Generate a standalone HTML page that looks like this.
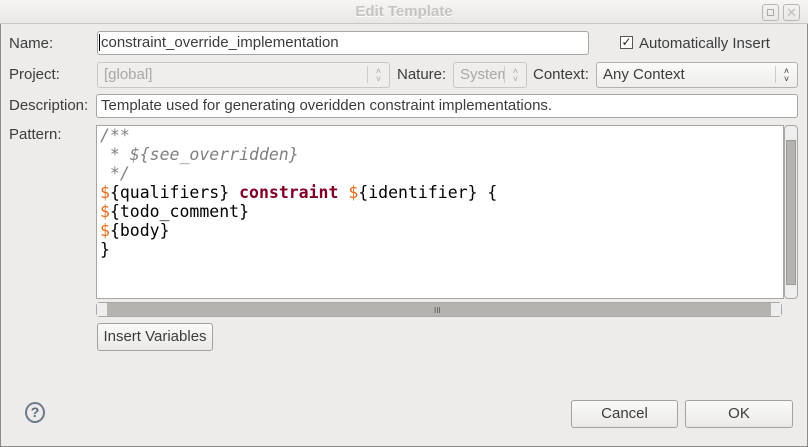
<!DOCTYPE html>
<html><head><style>
*{box-sizing:border-box;margin:0;padding:0}
body{width:808px;height:447px;overflow:hidden;background:#edeceb;font-family:"Liberation Sans",sans-serif;font-size:15px;color:#3c3c3c;position:relative}
.a{position:absolute}
.win{left:0;top:0;width:808px;height:447px;border:1px solid #8a8a86;border-top:none}
.title{left:0;top:0;width:808px;height:24px;background:linear-gradient(#f6f5f4,#e8e7e5);border-bottom:1px solid #c8c6c2;text-align:center;color:#c5c3bf;font-size:15px;font-weight:bold;line-height:24px;text-shadow:0 1px 0 #fff}
.lbl{color:#3c3c3c;font-size:15px}
.inp{background:#fff;border:1px solid #a7a6a2;border-radius:3px;font-size:15px;line-height:22px;padding-left:4px;color:#3c3c3c}
.combo{background:linear-gradient(#fbfbfa,#eeedeb);border:1px solid #b3b1ad;border-radius:3px;font-size:15px;line-height:24px;padding-left:6px}
.dis{color:#a9a7a3;background:#efeeec;border-color:#c9c7c3}
.arr{position:absolute;right:0;top:3px;width:22px;height:17px;border-left:1px solid #ccc;text-align:center;font-size:9px;line-height:8px;padding-top:1px}
.btn{background:linear-gradient(#fafaf9,#eae9e7);border:1px solid #a4a29e;border-radius:3px;text-align:center;line-height:26px;color:#3c3c3c}
.code{font-family:"DejaVu Sans Mono",monospace;font-size:16.5px;line-height:19px;color:#000;padding:0 0 0 3px;white-space:pre}
.c{color:#808080;font-style:italic}.d{color:#e86a1a}.k{color:#7f0027;font-weight:bold}
</style></head><body>
<div class="a win"></div>
<div class="a title">Edit Template</div>
<div class="a" style="left:762px;top:4px;width:17px;height:17px;border:1px solid #b8b6b2;border-radius:3px"><div style="margin:4px;width:7px;height:7px;border:1px solid #aaa"></div></div>
<div class="a" style="left:783px;top:4px;width:17px;height:17px;border:1px solid #b8b6b2;border-radius:3px;color:#bbb;font-size:13px;line-height:15px;text-align:center">✕</div>

<div class="a lbl" style="left:9px;top:35px">Name:</div>
<div class="a inp" style="left:97px;top:31px;width:492px;height:24px"><span style="border-left:1px solid #000;padding-left:1px;margin-left:-3px">constraint_override_implementation</span></div>
<div class="a" style="left:620px;top:36px;width:13px;height:13px;border:1px solid #555;background:#fff;font-size:12px;line-height:11px;text-align:center;color:#222">✓</div>
<div class="a lbl" style="left:639px;top:35px">Automatically Insert</div>

<div class="a lbl" style="left:9px;top:66px">Project:</div>
<div class="a combo dis" style="left:97px;top:62px;width:293px;height:26px">[global]<div class="arr">˄<br>˅</div></div>
<div class="a lbl" style="left:397px;top:66px">Nature:</div>
<div class="a combo dis" style="left:453px;top:62px;width:74px;height:26px;overflow:hidden">System<div class="arr" style="background:#efeeec">˄<br>˅</div></div>
<div class="a lbl" style="left:533px;top:66px">Context:</div>
<div class="a combo" style="left:596px;top:62px;width:202px;height:26px">Any Context<div class="arr" style="color:#333">˄<br>˅</div></div>

<div class="a lbl" style="left:9px;top:97px">Description:</div>
<div class="a inp" style="left:96px;top:94px;width:702px;height:24px">Template used for generating overidden constraint implementations.</div>

<div class="a lbl" style="left:9px;top:126px">Pattern:</div>
<div class="a code" style="left:96px;top:125px;width:688px;height:174px;background:#fff;border:1px solid #a7a6a2"><span class="c">/**
 * ${see_overridden}
 */</span>
<span class="d">$</span>{qualifiers} <span class="k">constraint</span> <span class="d">$</span>{identifier} {
<span class="d">$</span>{todo_comment}
<span class="d">$</span>{body}
}</div>
<div class="a" style="left:784px;top:125px;width:14px;height:174px;border:1px solid #a9a7a3;border-radius:4px;background:#eee"><div style="position:absolute;left:1px;top:14px;width:10px;height:145px;background:#b4b3b0;border:1px solid #999"></div></div>
<div class="a" style="left:96px;top:302px;width:686px;height:15px;border:1px solid #a9a7a3;border-radius:4px;background:#b4b3b0"><div style="position:absolute;left:0;top:0;width:10px;height:13px;background:#eee"></div><div style="position:absolute;right:0;top:0;width:10px;height:13px;background:#eee"></div><div style="position:absolute;left:337px;top:3px;font-size:8px;color:#555">III</div></div>
<div class="a btn" style="left:97px;top:323px;width:116px;height:28px">Insert Variables</div>

<div class="a" style="left:25px;top:402px;width:20px;height:21px;border:2px solid #6a7a8c;border-radius:50%;text-align:center;font-weight:bold;color:#5a6a7c;font-size:14px;line-height:17px">?</div>
<div class="a btn" style="left:571px;top:400px;width:107px;height:28px">Cancel</div>
<div class="a btn" style="left:685px;top:400px;width:108px;height:28px">OK</div>
</body></html>
